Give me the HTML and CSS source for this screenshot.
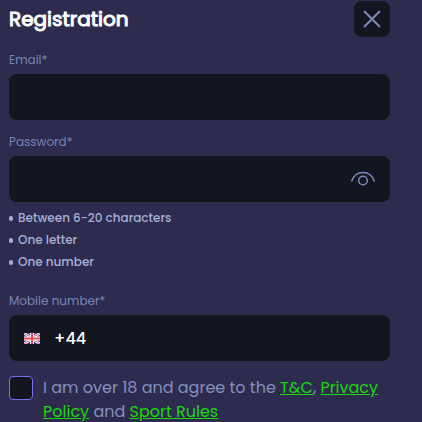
FILE: index.html
```html
<!DOCTYPE html>
<html lang="en">
<head>
    <meta charset="UTF-8">
    <meta name="viewport" content="width=device-width, initial-scale=1.0">
    <title>Registration</title>

    <link rel="stylesheet" href="styles.css">
</head>
<body>

    <main class="registration">
        <header>
            <h1>Registration</h1>
            <button type="button" class="close-btn" aria-label="Close">
                <svg width="18" height="18" viewBox="0 0 18 18">
                    <path d="M1 1L17 17M17 1L1 17"/>
                </svg>
            </button>
        </header>

        <form>
            <div class="field">
                <label for="email">Email*</label>
                <div class="input-box">
                    <input type="email" id="email" required>
                </div>
            </div>

            <div class="field">
                <label for="password">Password*</label>
                <div class="input-box">
                    <input type="password" id="password" required>
                    <button type="button" class="eye-btn" aria-label="Show password">
                        <svg width="26" height="16" viewBox="0 0 26 16">
                            <path d="M1.500 10.500C3.500 4.500 8 1.500 13 1.500s9.500 3 11.500 9"/>
                            <circle cx="13" cy="9.500" r="4.300"/>
                        </svg>
                    </button>
                </div>
                <ul class="rules">
                    <li>Between 6-20 characters</li>
                    <li>One letter</li>
                    <li>One number</li>
                </ul>
            </div>

            <div class="field phone">
                <label for="mobile">Mobile number*</label>
                <div class="input-box">
                    <svg class="flag" width="16" height="11" viewBox="0 0 16 11">
                        <rect width="16" height="11" fill="#2c4fa3"/>
                        <path d="M0 0L16 11M16 0L0 11" stroke="#fff" stroke-width="2.500"/>
                        <path d="M0 0L16 11M16 0L0 11" stroke="#e8475a" stroke-width="1"/>
                        <path d="M8 0V11M0 5.500H16" stroke="#fff" stroke-width="4"/>
                        <path d="M8 0V11M0 5.500H16" stroke="#f0485a" stroke-width="2"/>
                    </svg>
                    <input type="tel" id="mobile" value="+44" required>
                </div>
            </div>

            <div class="terms">
                <input type="checkbox" id="agree">
                <label for="agree">I am over 18 and agree to the <a href="#terms">T&amp;C</a>, <a href="#privacy">Privacy Policy</a> and <a href="#rules">Sport Rules</a></label>
            </div>
        </form>
    </main>

</body>
</html>
```

FILE: styles.css
```css
* {
    margin: 0;
    padding: 0;
    box-sizing: border-box;
}

body {
    font-family: Poppins, Inter, sans-serif;
    background-color: #2d2c4e;
    color: #8490bd;
}

.registration {
    padding: 1px 32px 0 9px;
}

header {
    display: flex;
    justify-content: space-between;
    align-items: center;
    margin-bottom: 14px;
}

header h1 {
    font-size: 20px;
    font-weight: 400;
    color: #ffffff;
    -webkit-text-stroke: 1px #ffffff;
}

button {
    border: none;
    background: none;
    cursor: pointer;
}

svg {
    display: block;
    flex-shrink: 0;
}

button svg {
    fill: none;
    stroke: #7b8abb;
}

.close-btn {
    display: flex;
    justify-content: center;
    align-items: center;
    width: 36px;
    height: 36px;
    border-radius: 8px;
    background-color: #13151f;
}

.close-btn svg {
    stroke-width: 2;
}

.eye-btn svg {
    stroke-width: 1.5;
}

/* Fields */
.field {
    margin-bottom: 13px;
}

.field label {
    display: block;
    margin-bottom: 5px;
    font-size: 12px;
    line-height: 18px;
    color: #7585b5;
}

.input-box {
    display: flex;
    align-items: center;
    height: 46px;
    padding: 0 14px;
    border-radius: 8px;
    background-color: #13151f;
}

.input-box input {
    flex: 1;
    min-width: 0;
    height: 100%;
    border: none;
    outline: none;
    background: none;
    font-family: inherit;
    font-size: 16px;
    font-weight: 500;
    color: #ffffff;
}

.rules {
    margin: 5px 0 19px;
    list-style: none;
    font-size: 12px;
    font-weight: 500;
    line-height: 22px;
    color: #a5b0d6;
}

.rules li {
    display: flex;
    align-items: center;
    gap: 5px;
}

.rules li::before {
    content: "";
    width: 4px;
    height: 5px;
    border-radius: 2px;
    background-color: #a5b0d6;
}

.phone {
    margin-bottom: 15px;
}

.phone .input-box {
    gap: 14px;
    padding: 0 15px;
}

/* Terms */
.terms {
    display: flex;
    align-items: flex-start;
    gap: 10px;
    font-size: 16px;
    line-height: 24px;
}

.terms input {
    appearance: none;
    flex-shrink: 0;
    width: 24px;
    height: 24px;
    border: 1px solid #7471f5;
    border-radius: 4px;
    background-color: #13151f;
}

.terms input:checked {
    background-color: #7471f5;
}

.terms a {
    color: #1bd80b;
    text-decoration: underline;
}
```
